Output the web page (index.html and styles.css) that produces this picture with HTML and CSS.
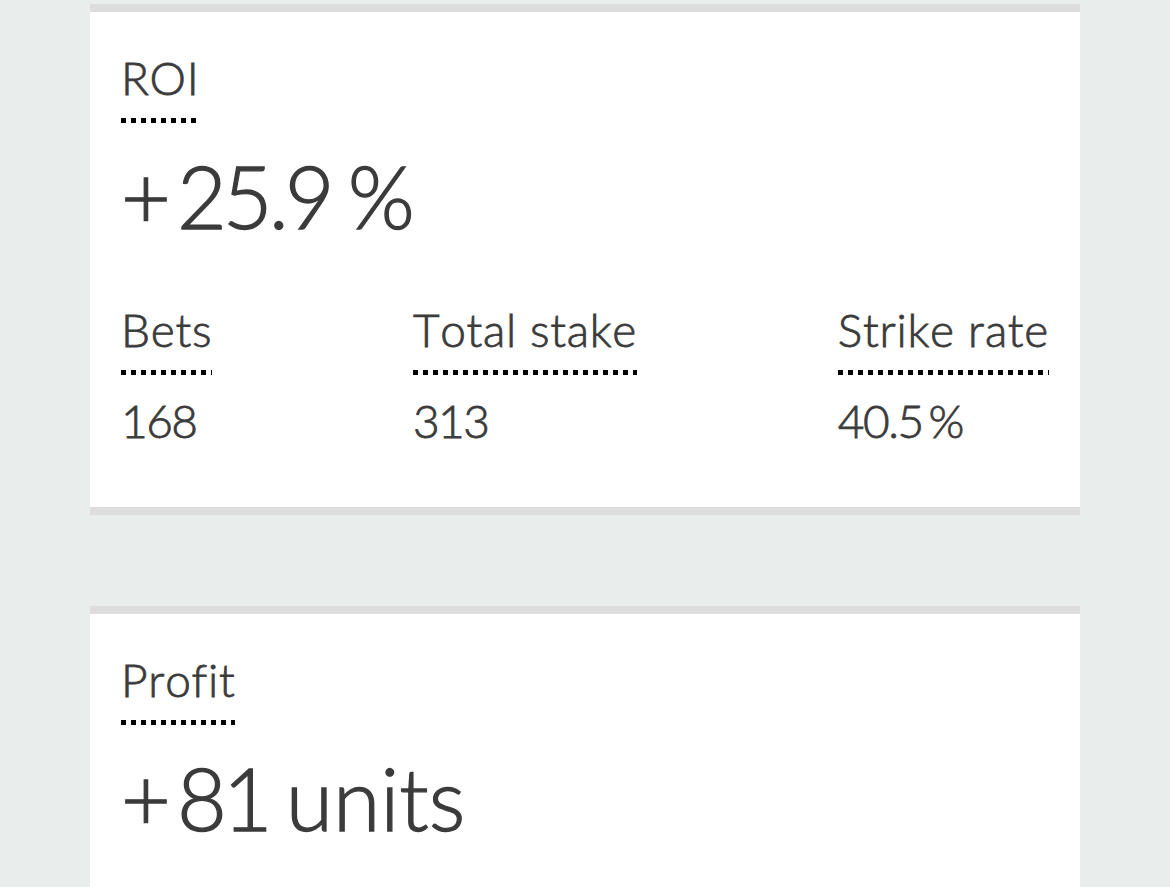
FILE: index.html
```html
<!DOCTYPE html>
<html lang="en">
<head>
<meta charset="utf-8">
<title>Stats</title>
<link rel="stylesheet" href="styles.css">
</head>
<body>
<main class="page">
  <section class="card card-roi">
    <div class="label-wrap"><span class="label">ROI</span></div>
    <div class="big"><span class="sign">+</span><span class="num">25.9</span>%</div>
    <div class="stats">
      <div class="stat">
        <span class="label">Bets</span>
        <div class="value"><span class="digits">168</span></div>
      </div>
      <div class="stat">
        <span class="label">Total stake</span>
        <div class="value"><span class="digits">313</span></div>
      </div>
      <div class="stat">
        <span class="label">Strike rate</span>
        <div class="value"><span class="digits">40.5</span>%</div>
      </div>
    </div>
  </section>
  <section class="card card-profit">
    <div class="label-wrap"><span class="label">Profit</span></div>
    <div class="big"><span class="sign">+</span><span class="num">81</span>units</div>
  </section>
</main>
</body>
</html>
```
FILE: styles.css
```css
html, body {
  margin: 0;
  padding: 0;
}
body {
  background: #e9edeb;
  font-family: Lato, "Open Sans", sans-serif;
  font-weight: 300;
  font-kerning: none;
  color: #3b3b3b;
  -webkit-text-stroke: 0.8px #3b3b3b;
  height: 887px;
  overflow: hidden;
}
.page {
  width: 990px;
  margin-left: 90px;
  padding-top: 4px;
  display: flex;
  flex-direction: column;
  gap: 91px;
}
.card {
  background: #fff;
  border-top: 8px solid #dcdddc;
  border-bottom: 8px solid #dcdddc;
  padding: 43px 31px 63px;
}
.label {
  display: inline-block;
  font-size: 46px;
  line-height: 46px;
  letter-spacing: 0.7px;
  padding-bottom: 22px;
  background-image: repeating-linear-gradient(to right, #000 0 5px, transparent 5px 10px);
  background-size: 100% 5px;
  background-position: left bottom;
  background-repeat: no-repeat;
}
.label-wrap {
  display: flex;
}
.big {
  font-size: 86px;
  line-height: 86px;
  margin-top: 30px;
  -webkit-text-stroke: 1.3px #3b3b3b;
}
.sign {
  margin-right: 6px;
}
.num {
  letter-spacing: -4px;
  margin-right: 17px;
}
.stats {
  display: flex;
  justify-content: space-between;
  margin-top: 68px;
}
.stat {
  display: flex;
  flex-direction: column;
  align-items: flex-start;
}
.value {
  font-size: 46px;
  line-height: 46px;
  margin-top: 23px;
}
.digits {
  letter-spacing: -1.5px;
  margin-right: 6px;
}
```
